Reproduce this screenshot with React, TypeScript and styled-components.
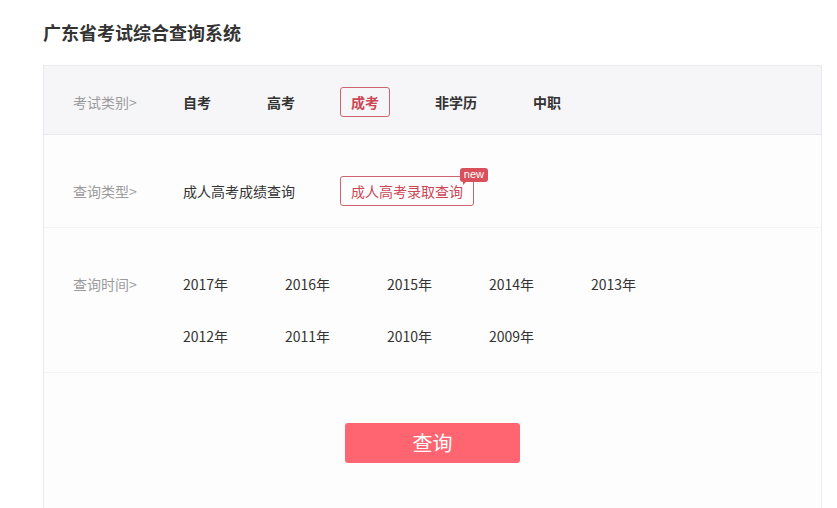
import styled, { createGlobalStyle } from 'styled-components';

const GlobalStyle = createGlobalStyle`
  body {
    margin: 0;
    background: #ffffff;
    font-family: "Noto Sans CJK SC", "Noto Sans", sans-serif;
    color: #333333;
  }
`;

const categories = ['自考', '高考', '成考', '非学历', '中职'];
const years = ['2017年', '2016年', '2015年', '2014年', '2013年', '2012年', '2011年', '2010年', '2009年'];

const App = () => {
  return (
    <>
      <GlobalStyle />
      <Page>
        <Title>广东省考试综合查询系统</Title>
        <Panel>
          <Row $bg="#f6f5f8" $top={21} $bottom={17} $line="#e9e8ec">
            <Label>考试类别&gt;</Label>
            <Options>
              {categories.map((c) => (
                <Option key={c} $active={c === '成考'} $bold>
                  {c}
                </Option>
              ))}
            </Options>
          </Row>

          <Row $bg="#fdfdfd" $top={41} $bottom={21} $line="#f3f3f4">
            <Label>查询类型&gt;</Label>
            <Options>
              <Option>成人高考成绩查询</Option>
              <Option $active>
                成人高考录取查询
                <NewBadge>new</NewBadge>
              </Option>
            </Options>
          </Row>

          <Row $bg="#fdfdfd" $top={41} $bottom={21} $line="#f3f3f4">
            <Label>查询时间&gt;</Label>
            <YearGrid>
              {years.map((y) => (
                <Option key={y}>{y}</Option>
              ))}
            </YearGrid>
          </Row>

          <ButtonArea>
            <QueryButton>查询</QueryButton>
          </ButtonArea>
        </Panel>
      </Page>
    </>
  );
};

const Page = styled.div`
  padding-left: 43px;
`;

const Title = styled.h1`
  margin: 20px 0 21px 0;
  font-size: 18px;
  line-height: 24px;
  font-weight: 700;
  color: #333333;
`;

const Panel = styled.div`
  width: 779px;
  box-sizing: border-box;
  border: 1px solid #ebebed;
  border-bottom: none;
  background: #fdfdfd;
`;

const Row = styled.div<{ $bg: string; $top: number; $bottom: number; $line: string }>`
  display: flex;
  align-items: flex-start;
  background: ${(p) => p.$bg};
  padding-top: ${(p) => p.$top}px;
  padding-bottom: ${(p) => p.$bottom}px;
  border-bottom: 1px solid ${(p) => p.$line};
`;

const Label = styled.div`
  width: 128px;
  flex-shrink: 0;
  box-sizing: border-box;
  padding-left: 29px;
  font-size: 14px;
  line-height: 30px;
  color: #9b9b9b;
  white-space: nowrap;
`;

const Options = styled.div`
  display: flex;
  align-items: center;
  gap: 34px;
`;

const YearGrid = styled.div`
  display: grid;
  grid-template-columns: repeat(5, 102px);
  row-gap: 22px;
  justify-items: start;
`;

const Option = styled.div<{ $active?: boolean; $bold?: boolean }>`
  position: relative;
  height: 30px;
  box-sizing: border-box;
  padding: 0 10px;
  border: 1px solid ${(p) => (p.$active ? '#cd6470' : 'transparent')};
  border-radius: 3px;
  font-size: 14px;
  line-height: 28px;
  font-weight: ${(p) => (p.$bold ? 700 : 400)};
  color: ${(p) => (p.$active ? '#cc4655' : '#333333')};
  white-space: nowrap;
  cursor: pointer;
`;

const NewBadge = styled.span`
  position: absolute;
  top: -9px;
  right: -15px;
  height: 14px;
  padding: 0 4px;
  border-radius: 3px;
  background: #d9505c;
  color: #ffffff;
  font-family: "Liberation Sans", Arial, sans-serif;
  font-size: 11px;
  line-height: 13px;
  font-weight: 400;

  &::after {
    content: '';
    position: absolute;
    left: 3px;
    bottom: -3px;
    border-left: 3px solid #d9505c;
    border-bottom: 3px solid transparent;
  }
`;

const ButtonArea = styled.div`
  display: flex;
  justify-content: center;
  padding: 50px 0 60px 0;
  background: #fdfdfe;
`;

const QueryButton = styled.button`
  width: 175px;
  height: 40px;
  border: none;
  border-radius: 3px;
  background: #fe6571;
  color: #ffffff;
  font-family: "Noto Sans CJK SC", sans-serif;
  font-size: 20px;
  line-height: 40px;
  padding: 0;
  cursor: pointer;
`;

export default App;
